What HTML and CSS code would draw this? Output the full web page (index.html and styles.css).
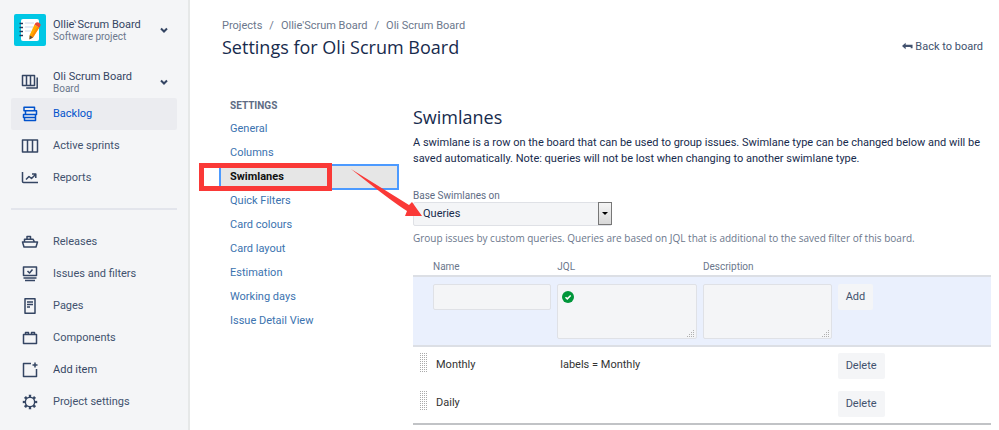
FILE: index.html
```
<!DOCTYPE html>
<html lang="en">
<head>
    <meta charset="UTF-8">
    <meta name="viewport" content="width=device-width, initial-scale=1.0">
    <title>Settings for Oli Scrum Board</title>
    <link rel="stylesheet" href="styles.css">
</head>
<body>

    <!-- Sidebar -->
    <div class="sidebar">
        <button class="switcher project">
            <svg class="logo" viewBox="0 0 32 32">
                <rect width="32" height="32" rx="2" fill="#00c7e5"/>
                <rect x="7" y="5" width="18" height="22" rx="2" fill="#fff"/>
                <path d="M11 9h9M11 13h8M11 17h6" stroke="#c8d8ea" stroke-width="1"/>
                <path d="M5.500 9.500h3.500M5.500 13.500h3.500M5.500 17.500h3.500M5.500 21.500h3.500" stroke="#253858" stroke-width="1.300"/>
                <path d="M20.500 10.500l4.500 3-6 10-3.500 1.800.300-4.500z" fill="#ffab00"/>
                <path d="M23.500 12.500l1.800 1.200-6.300 9.800-1.700-1z" fill="#ff8b00"/>
                <path d="M15.700 21.200l3.300 2.300-3.600 2z" fill="#5e4a3a"/>
                <path d="M20.500 10.500l1-1.500q1.500-1.500 4 0 2 1.500 .8 3.200l-1 1.500z" fill="#e5493a"/>
            </svg>
            <span class="switcher-text">
                <span class="switcher-name">Ollie‵Scrum Board</span>
                <span class="switcher-type">Software project</span>
            </span>
            <svg class="chevron" viewBox="0 0 8 8"><path d="M1 2.500l3 3 3-3"/></svg>
        </button>

        <button class="switcher board">
            <svg class="icon" viewBox="0 0 18 18"><path d="M1.500 2.500h12v10h-12zM5.500 2.500v10M9.500 2.500v10M16.200 4.500V15h-11"/></svg>
            <span class="switcher-text">
                <span class="switcher-name">Oli Scrum Board</span>
                <span class="switcher-type">Board</span>
            </span>
            <svg class="chevron" viewBox="0 0 8 8"><path d="M1 2.500l3 3 3-3"/></svg>
        </button>

        <ul class="menu">
            <li><a href="#" class="active">
                <svg class="icon" viewBox="0 0 18 18"><path d="M3 2.200h10.500v3.600H3zM4.500 5.800h11v3.600h-11zM2.500 9.400h12v3h-12zM3.500 12.400h11v3.200h-11z"/></svg>
                Backlog</a></li>
            <li><a href="#">
                <svg class="icon" viewBox="0 0 18 18"><path d="M1.500 3h15v12h-15zM6.500 3v12M11.500 3v12"/></svg>
                Active sprints</a></li>
            <li><a href="#">
                <svg class="icon" viewBox="0 0 18 18"><path d="M1.500 3v9.500q0 1 1 1H17M5 10.500l3-3 2.500 2L14.500 5.500M11 5h3.800V9"/></svg>
                Reports</a></li>
        </ul>
        <ul class="menu menu-lower">
            <li><a href="#">
                <svg class="icon" viewBox="0 0 18 18"><path d="M1.500 9h15l-1.500 5H3zM3.500 9V6.200h8.500l1.500 2.800M6 6V3.500h3.500V6"/></svg>
                Releases</a></li>
            <li><a href="#">
                <svg class="icon" viewBox="0 0 18 18"><path d="M2.500 2h13v8.500h-13zM6.500 6l2 2 3-3.500M2.500 13h13M4 15.500h10"/></svg>
                Issues and filters</a></li>
            <li><a href="#">
                <svg class="icon" viewBox="0 0 18 18"><path d="M4 1.700h10v14.600H4zM6 5h6M6 7.500h6M6 10h3"/></svg>
                Pages</a></li>
            <li><a href="#">
                <svg class="icon" viewBox="0 0 18 18"><path d="M2.500 5.500h13v9h-13zM4.500 5.500V3.500h3v2M10.500 5.500V3.500h3v2"/></svg>
                Components</a></li>
            <li><a href="#" class="strong">
                <svg class="icon" viewBox="0 0 18 18"><path d="M10 2.500H2.500v13h13V8M14 1.500v5M11.500 4h5"/></svg>
                Add item</a></li>
            <li><a href="#">
                <svg class="icon" viewBox="0 0 18 18"><circle cx="9" cy="9" r="4.700"/><circle class="teeth" cx="9" cy="9" r="6" pathLength="80"/></svg>
                Project settings</a></li>
        </ul>
    </div>

    <!-- Main area -->
    <div class="main">
        <div class="breadcrumbs">
            <a href="#">Projects</a><span>/</span><a href="#">Ollie'Scrum Board</a><span>/</span><a href="#">Oli Scrum Board</a>
        </div>
        <div class="page-header">
            <h1>Settings for Oli Scrum Board</h1>
            <a href="#" class="back">
                <svg viewBox="0 0 12 8"><path d="M0 4l4-3.500V2.500h7.500v4H9.500V5.200H4v2.300z"/></svg>
                Back to board</a>
        </div>

        <div class="columns">
            <div class="settings-nav">
                <h3>SETTINGS</h3>
                <ul>
                    <li><a href="#">General</a></li>
                    <li><a href="#">Columns</a></li>
                    <li class="selected"><a href="#">Swimlanes</a>
                        <div class="highlight"></div>
                        <svg class="arrow" viewBox="0 0 72 50"><path d="M0 0L58 36l3-3 10 14-17 0 2-5Q40 32 0 0z"/></svg>
                    </li>
                    <li><a href="#">Quick Filters</a></li>
                    <li><a href="#">Card colours</a></li>
                    <li><a href="#">Card layout</a></li>
                    <li><a href="#">Estimation</a></li>
                    <li><a href="#">Working days</a></li>
                    <li><a href="#">Issue Detail View</a></li>
                </ul>
            </div>

            <div class="content">
                <h2>Swimlanes</h2>
                <p>A swimlane is a row on the board that can be used to group issues. Swimlane type can be changed below and will be saved automatically. Note: queries will not be lost when changing to another swimlane type.</p>

                <label class="field-label" for="base">Base Swimlanes on</label>
                <div class="select-box">
                    <select id="base">
                        <option>Queries</option>
                    </select>
                    <span class="select-arrow"></span>
                </div>
                <div class="help">Group issues by custom queries. Queries are based on JQL that is additional to the saved filter of this board.</div>

                <table>
                    <thead>
                        <tr>
                            <th class="col-grip"></th>
                            <th class="col-name"><label for="name">Name</label></th>
                            <th class="col-jql"><label for="jql">JQL</label></th>
                            <th class="col-desc"><label for="desc">Description</label></th>
                            <th></th>
                        </tr>
                    </thead>
                    <tbody>
                        <tr class="add-row">
                            <td></td>
                            <td><input type="text" id="name"></td>
                            <td>
                                <div class="area">
                                    <textarea id="jql"></textarea>
                                    <svg class="valid" viewBox="0 0 12 12"><circle cx="6" cy="6" r="6"/><path d="M3.500 6.200l1.800 1.700L8.700 4.500"/></svg>
                                    <svg class="resize" viewBox="0 0 8 8"><path d="M6.500 1v7M4.500 3v5M2.500 5v3M.5 7v1"/></svg>
                                </div>
                            </td>
                            <td>
                                <div class="area">
                                    <textarea id="desc"></textarea>
                                    <svg class="resize" viewBox="0 0 8 8"><path d="M6.500 1v7M4.500 3v5M2.500 5v3M.5 7v1"/></svg>
                                </div>
                            </td>
                            <td><button class="btn">Add</button></td>
                        </tr>
                        <tr class="lane">
                            <td><span class="grip"></span></td>
                            <td>Monthly</td>
                            <td>labels = Monthly</td>
                            <td></td>
                            <td><button class="btn">Delete</button></td>
                        </tr>
                        <tr class="lane">
                            <td><span class="grip"></span></td>
                            <td>Daily</td>
                            <td></td>
                            <td></td>
                            <td><button class="btn">Delete</button></td>
                        </tr>
                    </tbody>
                </table>
            </div>
        </div>
    </div>

</body>
</html>
```
FILE: styles.css
```
* {
    box-sizing: border-box;
    margin: 0;
    padding: 0;
}
body {
    display: flex;
    min-height: 100vh;
    font-family: Roboto, "Open Sans", sans-serif;
    font-size: 11px;
    line-height: 16px;
    color: #172b4d;
    background-color: #fff;
}
a {
    text-decoration: none;
    color: inherit;
}
ul {
    list-style: none;
}
button, input, textarea, select {
    font: inherit;
    color: inherit;
}
h1, h2 {
    font-family: "Open Sans", sans-serif;
    font-size: 18px;
    line-height: 24px;
    font-weight: normal;
}

/* Sidebar */
.sidebar {
    flex: 0 0 190px;
    padding: 14px 11px 0;
    background-color: #f4f5f7;
    border-right: 2px solid #e6e8e8;
}
.switcher {
    display: flex;
    align-items: center;
    width: 100%;
    height: 32px;
    border: none;
    background: none;
    text-align: left;
}
.project {
    padding-left: 3px;
}
.board {
    margin-top: 20px;
    padding-left: 10px;
}
.logo {
    width: 32px;
    height: 32px;
    margin-right: 7px;
}
.board .icon {
    margin-right: 14px;
}
.switcher-text {
    flex-grow: 1;
}
.switcher-name {
    display: block;
    line-height: 13px;
    color: #344563;
}
.switcher-type {
    display: block;
    font-size: 10px;
    line-height: 12px;
    color: #6b778c;
}
.chevron {
    width: 8px;
    height: 8px;
    margin-right: 9px;
    fill: none;
    stroke: #344563;
    stroke-width: 2;
}
.icon {
    flex: none;
    width: 18px;
    height: 18px;
    fill: none;
    stroke: #344563;
    stroke-width: 1.5;
    stroke-linejoin: round;
}
.teeth {
    stroke-width: 2.5;
    stroke-dasharray: 5 5;
    stroke-dashoffset: 2.5;
}
.menu a {
    display: flex;
    align-items: center;
    gap: 14px;
    height: 32px;
    padding-left: 10px;
    border-radius: 2px;
    color: #42526e;
}
.menu a.active {
    background-color: #ebecf0;
    color: #0052cc;
}
.menu a.active .icon {
    stroke: #0052cc;
}
.menu a.strong {
    color: #344563;
}
.menu-lower {
    margin-top: 14px;
    padding-top: 16px;
    border-top: 2px solid #e3e5ec;
}

/* Main area */
.main {
    flex-grow: 1;
    min-width: 0;
    padding: 18px 8px 0 30px;
}
.breadcrumbs {
    padding-left: 2px;
    color: #6b778c;
}
.breadcrumbs span {
    margin: 0 7px;
}
.page-header {
    display: flex;
    justify-content: space-between;
    align-items: center;
    padding: 1px 8px 0 2px;
}
.back {
    color: #42526e;
}
.back svg {
    width: 11px;
    height: 8px;
    fill: #42526e;
}
.columns {
    display: flex;
    gap: 15px;
    padding-top: 38px;
}

/* Settings navigation */
.settings-nav {
    flex: 0 0 178px;
}
.settings-nav h3 {
    padding-left: 10px;
    font-size: 10px;
    font-weight: bold;
    line-height: 18px;
    color: #5e6c84;
}
.settings-nav ul {
    padding-top: 2px;
}
.settings-nav a {
    display: block;
    padding-left: 10px;
    line-height: 24px;
    color: #3b73af;
}
.selected {
    position: relative;
}
.settings-nav .selected a {
    background-color: #e6e6e6;
    outline: 2px solid #4c9aff;
    outline-offset: -1px;
    font-weight: bold;
    color: #111;
}
.highlight {
    position: absolute;
    top: -2px;
    left: -21px;
    width: 133px;
    height: 28px;
    border: 5px solid #fa3937;
}
.arrow {
    position: absolute;
    top: 4px;
    left: 131px;
    width: 72px;
    height: 50px;
    z-index: 1;
    fill: #fa3937;
}

/* Swimlane settings */
.content {
    flex-grow: 1;
    min-width: 0;
    padding-top: 8px;
}
.content h2 {
    margin-bottom: 6px;
}
.field-label {
    display: block;
    margin-top: 23px;
    font-size: 10px;
    line-height: 12px;
    color: #5e6c84;
}
.select-box {
    position: relative;
    width: 199px;
}
.select-box select {
    appearance: none;
    width: 100%;
    height: 24px;
    padding-left: 9px;
    border: 1px solid #dfe1e6;
    border-radius: 2px;
    background-color: #f4f5f7;
}
.select-arrow {
    position: absolute;
    top: 0;
    right: 0;
    width: 14px;
    height: 23px;
    border: 1px solid #777;
    background: linear-gradient(#f5f5f5, #d8d8d8);
    pointer-events: none;
}
.select-arrow::after {
    content: "";
    position: absolute;
    top: 9px;
    left: 3px;
    border: 3px solid transparent;
    border-top-color: #000;
}
.help {
    margin-top: 4px;
    font-family: "Open Sans", sans-serif;
    font-size: 10px;
    color: #6b778c;
}

/* Queries table */
table {
    width: 100%;
    margin-top: 13px;
    border-collapse: collapse;
    table-layout: fixed;
    border-bottom: 2px solid #c1c3c6;
}
th {
    height: 17px;
    font-size: 10px;
    font-weight: normal;
    text-align: left;
    color: #6b778c;
}
.col-grip {
    width: 20px;
}
.col-name {
    width: 21.5%;
}
.col-jql {
    width: 25.2%;
}
.col-desc {
    width: 23.3%;
}
td {
    vertical-align: top;
}
.add-row {
    height: 70px;
    border-top: 2px solid #dcdfe5;
    border-bottom: 2px solid #dcdfe5;
    background-color: #eaf0fd;
}
.add-row td {
    padding: 7px 6px 6px 0;
}
.add-row input, .add-row textarea {
    display: block;
    width: 100%;
    border: 1px solid #dfe1e6;
    border-radius: 2px;
    background-color: #f4f5f7;
}
.add-row input {
    height: 26px;
    padding: 0 4px;
}
.add-row textarea {
    height: 55px;
    padding: 4px 4px 4px 20px;
    resize: none;
}
.area {
    position: relative;
}
.valid {
    position: absolute;
    top: 7px;
    left: 5px;
    width: 12px;
    height: 12px;
    fill: #00963a;
}
.valid path {
    fill: none;
    stroke: #fff;
    stroke-width: 1.5;
}
.resize {
    position: absolute;
    right: 2px;
    bottom: 2px;
    width: 8px;
    height: 8px;
    fill: none;
    stroke: #b0b0b0;
    stroke-dasharray: 1 1;
}
.btn {
    height: 26px;
    padding: 0 8px;
    border: none;
    border-radius: 2px;
    background-color: #f4f5f7;
    color: #42526e;
}
.lane {
    height: 39px;
    color: #333;
}
.lane td {
    padding: 10px 0 0 3px;
}
.lane td:first-child {
    padding: 6px 0 0 6px;
}
.lane td:last-child {
    padding: 6px 0 0;
}
.grip {
    display: block;
    width: 8px;
    height: 20px;
    background-image: conic-gradient(#aaa 25%, transparent 0);
    background-size: 2px 2px;
}
```
